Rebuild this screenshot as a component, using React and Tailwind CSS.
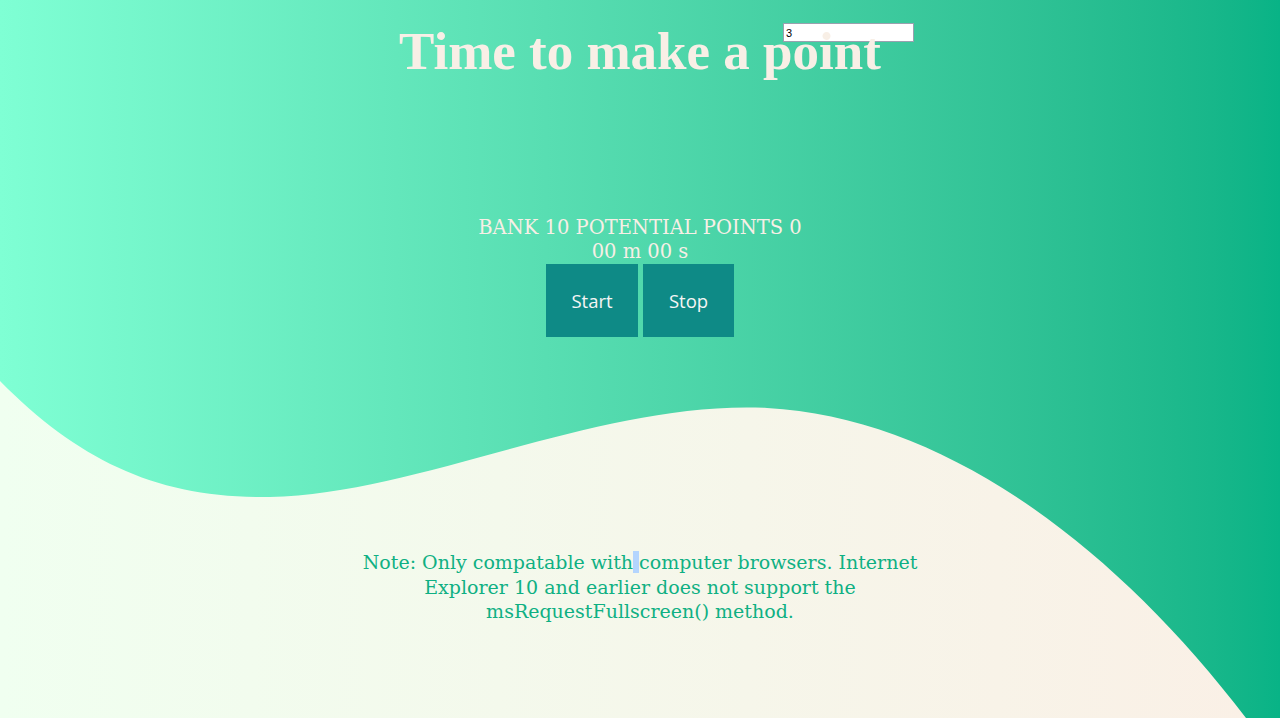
import { useState } from 'react'

const serif = { fontFamily: '"DejaVu Serif", Georgia, serif' }

const App = () => {
  const [minutes, setMinutes] = useState('3')

  return (
    <div className="relative w-full h-[718px] overflow-hidden bg-gradient-to-r from-[#7fffd4] to-[#08b386]">
      {/* wave */}
      <svg className="absolute inset-0 w-full h-full" viewBox="0 0 1280 718" preserveAspectRatio="none">
        <defs>
          <linearGradient id="cream" x1="0" y1="0" x2="1" y2="0">
            <stop offset="0" stopColor="#f0fff0" />
            <stop offset="1" stopColor="#faf0e6" />
          </linearGradient>
        </defs>
        <path
          d="M0,381 C80,462 160,499 270,497 C420,494 600,400 767,408 C940,417 1110,540 1246,718 L0,718 Z"
          fill="url(#cream)"
        />
      </svg>

      <input
        type="text"
        value={minutes}
        onChange={(e) => setMinutes(e.target.value)}
        className="absolute left-[783px] top-[23px] w-[131px] h-[19px] bg-white border border-gray-400 px-[2px] text-[11px] text-black outline-none"
        style={{ fontFamily: '"Liberation Sans", Arial, sans-serif' }}
      />

      <div className="relative flex flex-col items-center">
        <h1
          className="mt-[20px] text-[53px] leading-[62px] font-bold text-[#f8efe6]"
          style={{ fontFamily: '"Liberation Serif", Georgia, serif' }}
        >
          Time to make a point
        </h1>

        <div className="mt-[134px] flex flex-col items-center text-[19.5px] leading-[24px] text-[#f8efe6]" style={serif}>
          <span>BANK 10 POTENTIAL POINTS 0</span>
          <span>00 m 00 s</span>
        </div>

        <div className="flex gap-[5px]" style={{ fontFamily: '"Open Sans", Roboto, sans-serif' }}>
          <button className="w-[92px] h-[73px] bg-[#0e8a86] text-[#f5f5f5] text-[18.5px]">Start</button>
          <button className="w-[91px] h-[73px] bg-[#0e8a86] text-[#f5f5f5] text-[18.5px]">Stop</button>
        </div>

        <p
          className="mt-[213px] w-[580px] text-center text-[19px] leading-[24.5px] text-[#0fb083]"
          style={serif}
        >
          Note: Only compatable with<span className="bg-[#b4d5fe]"> </span>computer browsers. Internet Explorer 10 and earlier does not support the msRequestFullscreen() method.
        </p>
      </div>
    </div>
  )
}

export default App
